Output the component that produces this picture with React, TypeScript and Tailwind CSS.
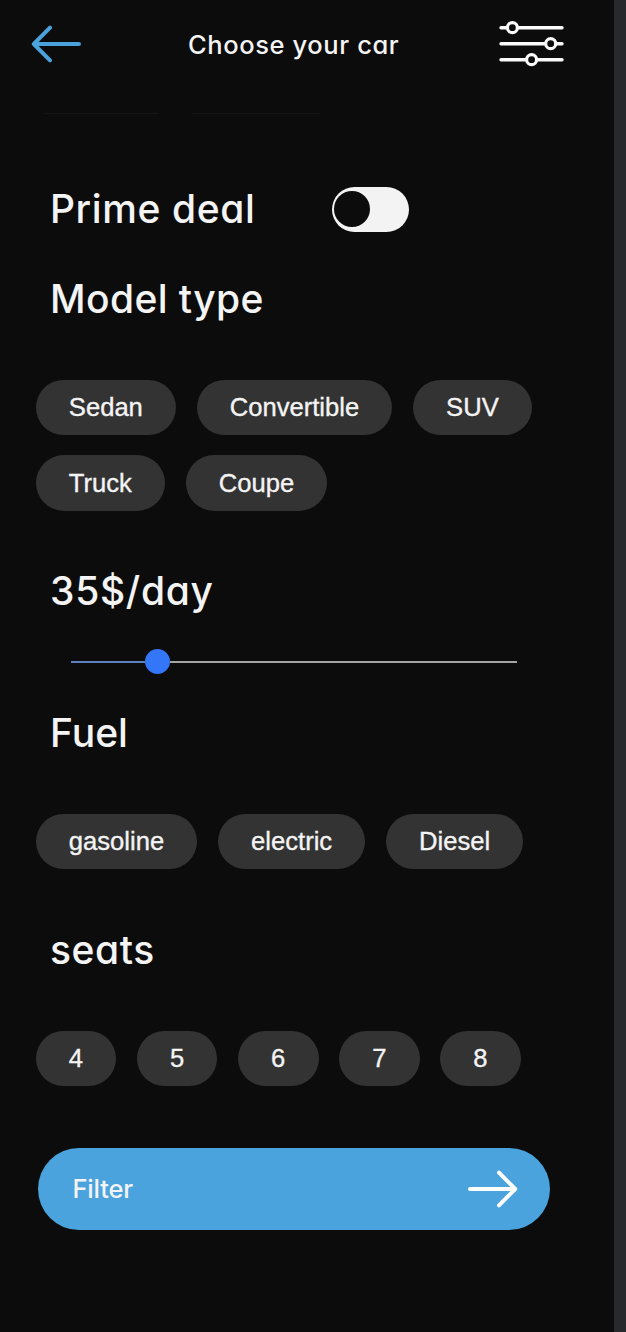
import React from "react";

const geometric = "font-['Inter',sans-serif] [font-feature-settings:'cv11'] [font-optical-sizing:none] whitespace-nowrap";

function Heading({ children, className }: { children: string; className: string }) {
  return (
    <h2 className={`${geometric} h-[60px] text-[39px] leading-[61px] font-medium ${className}`}>
      {children}
    </h2>
  );
}

function Chips({ items, className }: { items: string[]; className: string }) {
  return (
    <div className={`flex flex-wrap gap-x-[20.4px] gap-y-[20.2px] pl-[35.6px] ${className}`}>
      {items.map((item) => (
        <button
          key={item}
          className="h-[55.4px] rounded-full bg-[#333333] px-[33.25px] font-['Liberation_Sans',Arial,sans-serif] text-[25.6px] leading-[55px] text-[#f4f4f4] [-webkit-text-stroke:0.35px]"
        >
          {item}
        </button>
      ))}
    </div>
  );
}

function Arrow({ className }: { className: string }) {
  return (
    <svg
      viewBox="0 0 50 38"
      className={`h-[38px] w-[50px] ${className}`}
      fill="none"
      stroke="currentColor"
      strokeWidth="4"
      strokeLinecap="round"
      strokeLinejoin="round"
    >
      <path d="M2 19H47.2M31 2.7L47.2 19L31 35.3" />
    </svg>
  );
}

function SlidersIcon() {
  return (
    <svg viewBox="0 0 66 48" className="h-12 w-[66px]" fill="none" stroke="#fafafa" strokeLinecap="round">
      <path d="M3 7.7H64M3 23.7H64M3 39.7H64" strokeWidth="3.4" />
      <g fill="#0c0c0c" strokeWidth="3.2">
        <circle cx="14.4" cy="7.7" r="5" />
        <circle cx="52.7" cy="23.7" r="5" />
        <circle cx="33.6" cy="39.7" r="5" />
      </g>
    </svg>
  );
}

export default function App() {
  return (
    <div className="flex h-[1332px] w-[626px] overflow-hidden bg-[#28292c]">
      <main className="flex h-full w-[614px] flex-col bg-[#0c0c0c] text-[#f4f4f4]">
        <header className="flex h-[87px] items-center pl-[31px]">
          <Arrow className="rotate-180 text-[#4aa3dc]" />
          <h1 className={`${geometric} mt-[3px] ml-[107px] w-[213px] text-[25.5px] leading-[40px] font-medium tracking-[0.6px]`}>
            Choose your car
          </h1>
          <div className="ml-[97px]">
            <SlidersIcon />
          </div>
        </header>
        <div className="flex h-[91px] gap-[34px] pt-[26px] pl-[44px]">
          <div className="h-px w-[114px] bg-[#141414]" />
          <div className="h-px w-[128px] bg-[#141414]" />
        </div>

        <div className="flex h-[60px] items-center pl-[50px]">
          <Heading className="w-[282px] tracking-[0.6px]">Prime deal</Heading>
          <button className="mt-[2px] flex h-[45px] w-[77px] items-center rounded-full bg-[#f3f3f3] pl-[1.5px]">
            <span className="size-[36px] rounded-full bg-[#0c0c0c]" />
          </button>
        </div>
        <Heading className="mt-[30px] pl-[50px] tracking-[0.4px]">Model type</Heading>
        <Chips className="mt-[51.5px] h-[131.8px]" items={["Sedan", "Convertible", "SUV", "Truck", "Coupe"]} />

        <Heading className="mt-[48.7px] pl-[50px] tracking-[0.7px]">35$/day</Heading>
        <div className="mt-[29px] ml-[71px] flex h-[26px] w-[446px] items-center">
          <div className="h-[2px] w-[74.4px] bg-[#5c80c0]" />
          <div className="size-[25px] rounded-full bg-[#3376f8]" />
          <div className="h-[2px] flex-1 bg-[#a5a5a5]" />
        </div>

        <Heading className="mt-[27px] pl-[50px] tracking-[0px]">Fuel</Heading>
        <Chips className="mt-[51.8px] h-[56px]" items={["gasoline", "electric", "Diesel"]} />

        <Heading className="mt-[49.2px] pl-[50px] tracking-[0.6px]">seats</Heading>
        <Chips className="mt-[51.7px] h-[56px]" items={["4", "5", "6", "7", "8"]} />

        <button className="mt-[61.6px] ml-[38px] flex h-[81.7px] w-[512px] items-center justify-between rounded-full bg-[#4aa3dc] pr-[32px] pl-[34.5px]">
          <span className={`${geometric} text-[25.5px] leading-[40px] font-medium tracking-[-0.2px]`}>Filter</span>
          <Arrow className="text-white" />
        </button>
      </main>
    </div>
  );
}
